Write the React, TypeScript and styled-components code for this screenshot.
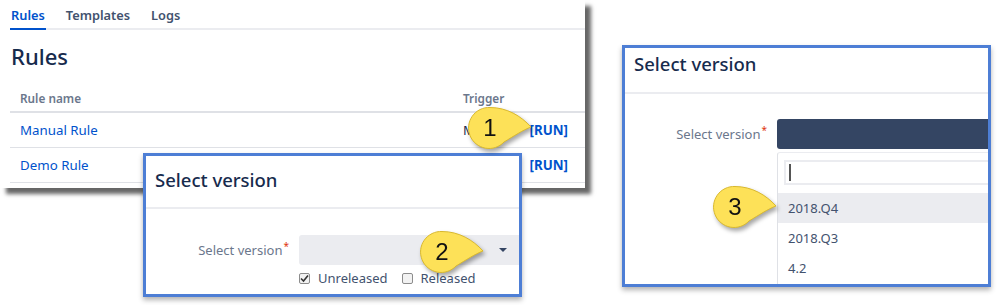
import React from "react";
import styled, { createGlobalStyle } from "styled-components";

const Global = createGlobalStyle`
  html, body { margin: 0; padding: 0; background: #fff; }
  body { font-family: "Noto Sans", "Open Sans", sans-serif; color: #172b4d; }
  * { box-sizing: border-box; }
`;

const Canvas = styled.div`
  position: relative;
  width: 999px;
  height: 305px;
  overflow: hidden;
  background: #fff;
`;

/* ---------- Window 1: Rules ---------- */
const RulesWindow = styled.div`
  position: absolute;
  left: 0;
  top: 0;
  width: 585px;
  height: 188px;
  background: #fff;
  padding-left: 10px;
  box-shadow: 6px 6px 4px rgba(0, 0, 0, 0.6);
  display: flex;
  flex-direction: column;
`;

const Tabs = styled.div`
  display: flex;
  gap: 19px;
  height: 30px;
  border-bottom: 2px solid #ebecf0;
  padding-top: 6px;
`;

const Tab = styled.div<{ $active?: boolean }>`
  font-size: 12.8px;
  font-weight: 600;
  color: ${(p) => (p.$active ? "#0052cc" : "#42526e")};
  padding: 0 1px;
  height: 24px;
  border-bottom: 2px solid ${(p) => (p.$active ? "#0052cc" : "transparent")};
  margin-bottom: -2px;
`;

const Heading = styled.h1`
  margin: 13px 0 0 1px;
  font-size: 22px;
  font-weight: 500;
  line-height: 26px;
  color: #172b4d;
`;

const Table = styled.div`
  display: flex;
  flex-direction: column;
  margin-top: 15px;
`;

const Row = styled.div<{ $head?: boolean }>`
  display: grid;
  grid-template-columns: 443px 1fr auto;
  align-items: center;
  height: ${(p) => (p.$head ? "29px" : "35px")};
  padding: 0 17px 0 10px;
  border-bottom: ${(p) => (p.$head ? "2px" : "1px")} solid #dfe1e6;
`;

const HeadCell = styled.div`
  font-size: 11.8px;
  font-weight: 600;
  color: #6b778c;
`;

const LinkCell = styled.div`
  font-size: 13.3px;
  color: #0052cc;
`;

const TextCell = styled.div`
  font-size: 13.3px;
  color: #172b4d;
`;

const RunLink = styled.div`
  font-size: 13.3px;
  font-weight: 700;
  color: #0052cc;
`;

/* ---------- Dialog windows ---------- */
const Dialog = styled.div<{ $left: number; $top: number; $w: number; $h: number }>`
  position: absolute;
  left: ${(p) => p.$left}px;
  top: ${(p) => p.$top}px;
  width: ${(p) => p.$w}px;
  height: ${(p) => p.$h}px;
  background: #fff;
  border: 3px solid #4d7ed5;
  box-shadow: 0 3px 5px rgba(0, 0, 0, 0.3);
  display: flex;
  flex-direction: column;
  overflow: hidden;
`;

const DialogTitle = styled.div<{ $h: number; $pt: number }>`
  height: ${(p) => p.$h}px;
  padding: ${(p) => p.$pt}px 0 0 9px;
  font-size: 18.5px;
  line-height: 26px;
  font-weight: 500;
  color: #172b4d;
  border-bottom: 2px solid #ebecf0;
  flex-shrink: 0;
`;

const FormRow = styled.div<{ $top: number; $labelW: number }>`
  display: grid;
  grid-template-columns: ${(p) => p.$labelW}px 1fr;
  column-gap: 10px;
  margin-top: ${(p) => p.$top}px;
`;

const Label = styled.div`
  height: 30px;
  display: flex;
  align-items: center;
  justify-content: flex-end;
  font-size: 13px;
  color: #6b778c;
`;

const Req = styled.sup`
  color: #de350b;
  font-size: 10px;
  margin-left: 1px;
  align-self: flex-start;
  margin-top: 4px;
`;

const SelectBox = styled.div<{ $dark?: boolean }>`
  height: 30px;
  background: ${(p) => (p.$dark ? "#344563" : "#ebecf0")};
  border-radius: 3px 0 0 3px;
  display: flex;
  align-items: center;
  justify-content: flex-end;
  padding-right: 12px;
`;

const Caret = styled.div`
  width: 0;
  height: 0;
  border-left: 4px solid transparent;
  border-right: 4px solid transparent;
  border-top: 4px solid #344563;
`;

const Checks = styled.div`
  display: flex;
  align-items: center;
  gap: 14px;
  margin-top: 4px;
  grid-column: 2;
`;

const CheckItem = styled.label`
  display: flex;
  align-items: center;
  gap: 8px;
  font-size: 13px;
  color: #42526e;
`;

const Box = styled.span`
  width: 11px;
  height: 11px;
  border: 1px solid #8c8c8c;
  border-radius: 2px;
  background: #f2f2f2;
  display: flex;
  align-items: center;
  justify-content: center;
`;

const Dropdown = styled.div`
  margin-top: 3px;
  height: 134px;
  border-left: 1px solid #dfe1e6;
  border-top: 1px solid #ebecf0;
  border-radius: 3px 0 0 0;
  background: #fff;
  display: flex;
  flex-direction: column;
  padding-top: 7px;
`;

const Search = styled.div`
  margin: 0 0 0 6px;
  height: 25px;
  border: 2px solid #ebecf0;
  border-right: none;
  display: flex;
  align-items: center;
  padding-left: 3px;
`;

const Cursor = styled.span`
  width: 2px;
  height: 17px;
  background: #555;
`;

const Option = styled.div<{ $active?: boolean }>`
  height: 30px;
  display: flex;
  align-items: center;
  padding-left: 10px;
  font-size: 13px;
  color: #42526e;
  background: ${(p) => (p.$active ? "#ebecf0" : "transparent")};
`;

const OptionList = styled.div`
  margin-top: 8px;
  display: flex;
  flex-direction: column;
`;

/* ---------- Callouts ---------- */
const CalloutWrap = styled.div<{ $x: number; $y: number }>`
  position: absolute;
  left: ${(p) => p.$x}px;
  top: ${(p) => p.$y}px;
  width: 76px;
  height: 54px;
  filter: drop-shadow(2px 3px 2px rgba(0, 0, 0, 0.35));
`;

const CalloutNum = styled.div`
  position: absolute;
  left: 6px;
  top: 6px;
  width: 42px;
  height: 40px;
  display: flex;
  align-items: center;
  justify-content: center;
  font-family: "Liberation Sans", Arial, sans-serif;
  font-size: 24px;
  color: #111;
`;

function Callout({ cx, cy, n }: { cx: number; cy: number; n: string }) {
  // circle center at (26,26), radius ~20.5, tip at (68,25)
  return (
    <CalloutWrap $x={cx - 26} $y={cy - 26}>
      <svg width="76" height="54" viewBox="0 0 76 54">
        <path
          d="M68 25 C58 14, 44 5.5, 27 5.5 A20.5 20.5 0 1 0 41 40 C51 34, 60 28, 68 25 Z"
          fill="#fde158"
          stroke="#d8b82e"
          strokeWidth="1"
        />
      </svg>
      <CalloutNum>{n}</CalloutNum>
    </CalloutWrap>
  );
}

function Check() {
  return (
    <svg width="9" height="9" viewBox="0 0 9 9">
      <path d="M1 4.5 L3.5 7 L8 1.5" fill="none" stroke="#333" strokeWidth="1.6" />
    </svg>
  );
}

export default function App() {
  return (
    <Canvas>
      <Global />
      <RulesWindow>
        <Tabs>
          <Tab $active>Rules</Tab>
          <Tab>Templates</Tab>
          <Tab>Logs</Tab>
        </Tabs>
        <Heading>Rules</Heading>
        <Table>
          <Row $head>
            <HeadCell>Rule name</HeadCell>
            <HeadCell>Trigger</HeadCell>
            <span />
          </Row>
          <Row>
            <LinkCell>Manual Rule</LinkCell>
            <TextCell>Manual</TextCell>
            <RunLink>[RUN]</RunLink>
          </Row>
          <Row>
            <LinkCell>Demo Rule</LinkCell>
            <TextCell>Manual</TextCell>
            <RunLink>[RUN]</RunLink>
          </Row>
        </Table>
      </RulesWindow>

      <Dialog $left={143} $top={153} $w={379} $h={144}>
        <DialogTitle $h={53} $pt={11}>Select version</DialogTitle>
        <FormRow $top={26} $labelW={143}>
          <Label>
            Select version<Req>*</Req>
          </Label>
          <SelectBox>
            <Caret />
          </SelectBox>
          <Checks>
            <CheckItem>
              <Box>
                <Check />
              </Box>
              Unreleased
            </CheckItem>
            <CheckItem>
              <Box />
              Released
            </CheckItem>
          </Checks>
        </FormRow>
      </Dialog>

      <Dialog $left={622} $top={45} $w={369} $h={242}>
        <DialogTitle $h={46} $pt={3}>Select version</DialogTitle>
        <FormRow $top={25} $labelW={142}>
          <Label>
            Select version<Req>*</Req>
          </Label>
          <SelectBox $dark />
          <span />
          <Dropdown>
            <Search>
              <Cursor />
            </Search>
            <OptionList>
              <Option $active>2018.Q4</Option>
              <Option>2018.Q3</Option>
              <Option>4.2</Option>
            </OptionList>
          </Dropdown>
        </FormRow>
      </Dialog>

      <Callout cx={489} cy={128} n="1" />
      <Callout cx={441} cy={252} n="2" />
      <Callout cx={734} cy={207} n="3" />
    </Canvas>
  );
}
